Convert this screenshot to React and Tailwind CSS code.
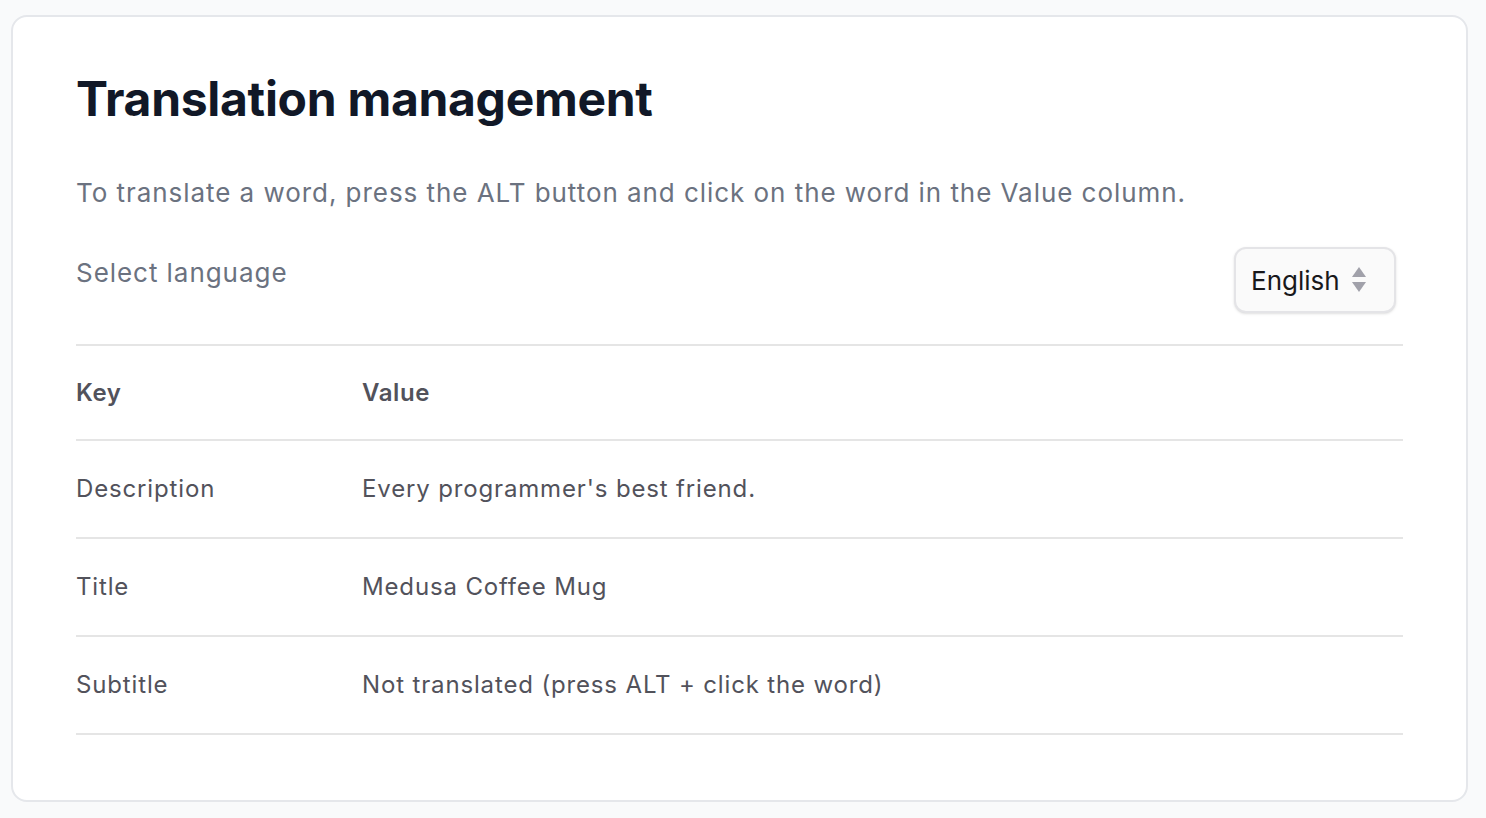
import React from "react";

export default function App() {
  const rows = [
    ["Description", "Every programmer's best friend."],
    ["Title", "Medusa Coffee Mug"],
    ["Subtitle", "Not translated (press ALT + click the word)"],
  ];
  return (
    <div className="min-h-[818px] w-full bg-[#f9fafb] pt-[15px] pl-[11px] pr-[18px] pb-[16px]" style={{ fontFamily: "Inter, 'Noto Sans', sans-serif" }}>
      <div className="h-[787px] rounded-[16px] border-2 border-[#e5e7eb] bg-white pl-[63px] pr-[63px] pt-[50px]">
        <h1 className="text-[48px] font-bold leading-[64px] tracking-[-0.3px] text-[#111827]">Translation management</h1>
        <p className="mt-[42px] text-[26px] leading-[40px] tracking-[0.95px] text-[#6b7280]">
          To translate a word, press the ALT button and click on the word in the Value column.
        </p>
        <div className="mt-[40px] flex items-start justify-between">
          <div className="text-[26px] leading-[40px] tracking-[0.95px] text-[#6b7280]">Select language</div>
          <div className="mr-[7px] mt-[-6px] flex h-[66px] w-[162px] items-center rounded-[12px] border-2 border-[#e4e4e7] bg-[#fafafa] pl-[15px] shadow-sm">
            <span className="text-[26px] text-[#18181b]">English</span>
            <svg width="16" height="30" viewBox="0 0 16 30" className="ml-[11px]">
              <path d="M8 2 L15 12 L1 12 Z" fill="#a1a1aa" />
              <path d="M1 17 L15 17 L8 27 Z" fill="#a1a1aa" />
            </svg>
          </div>
        </div>
        <div className="mt-[31px] border-t-2 border-[#e5e5e5]">
          <div className="flex h-[95px] items-center border-b-2 border-[#e5e5e5] text-[24px] font-semibold tracking-[0.6px] text-[#52525b]">
            <div className="w-[286px]">Key</div>
            <div>Value</div>
          </div>
          {rows.map(([k, v]) => (
            <div key={k} className="flex h-[98px] items-center border-b-2 border-[#e5e5e5] text-[24px] tracking-[0.85px] text-[#52525b]">
              <div className="w-[286px]">{k}</div>
              <div>{v}</div>
            </div>
          ))}
        </div>
      </div>
    </div>
  );
}
